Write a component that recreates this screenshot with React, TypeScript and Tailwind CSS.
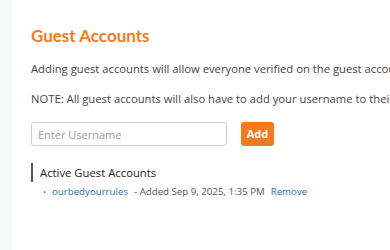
import React from "react";

export default function App() {
  return (
    <div
      className="flex h-[250px] w-[390px] overflow-hidden bg-white"
      style={{ fontFamily: '"Open Sans", "Noto Sans", sans-serif' }}
    >
      <div className="w-[12px] shrink-0 bg-[#f7f8f9]" />
      <div className="flex min-w-0 flex-1 flex-col pl-[19px] pt-[24px]">
        <h1
          className="whitespace-nowrap text-[17px] font-bold leading-[24px] text-[#f47a20]"
          style={{ fontFamily: 'Lato, "Open Sans", sans-serif' }}
        >
          Guest Accounts
        </h1>
        <p className="mt-[12px] whitespace-nowrap text-[11.25px] leading-[18px] text-[#444]">
          Adding guest accounts will allow everyone verified on the guest account to post here.
        </p>
        <p className="mt-[12px] whitespace-nowrap text-[11.25px] leading-[18px] text-[#444]">
          NOTE: All guest accounts will also have to add your username to their guest accounts.
        </p>
        <div className="mt-[14px] flex items-center gap-[14px]">
          <input
            className="h-[24px] w-[196px] rounded-[3px] border border-[#cfcfcf] px-[6px] text-[11px] text-[#444] outline-none placeholder:text-[#9a9a9a]"
            placeholder="Enter Username"
          />
          <button className="h-[24px] w-[33px] rounded-[3px] bg-[#f47a20] text-[11px] font-bold text-white">
            Add
          </button>
        </div>
        <div className="mt-[17px] border-l-2 border-[#555] pl-[7px]">
          <div className="text-[11.3px] leading-[19px] text-[#222]">Active Guest Accounts</div>
        </div>
        <ul className="mt-[1px] pl-[12px] text-[9.7px] leading-[18px]">
          <li className="flex items-center whitespace-nowrap">
            <span className="mr-[6px] text-[8px] text-[#666]">•</span>
            <span className="text-[#1f6fa6]">ourbedyourrules</span>
            <span className="ml-[6px] text-[#555]">- Added Sep 9, 2025, 1:35 PM</span>
            <span className="ml-[6px] text-[#1f6fa6]">Remove</span>
          </li>
        </ul>
      </div>
    </div>
  );
}
